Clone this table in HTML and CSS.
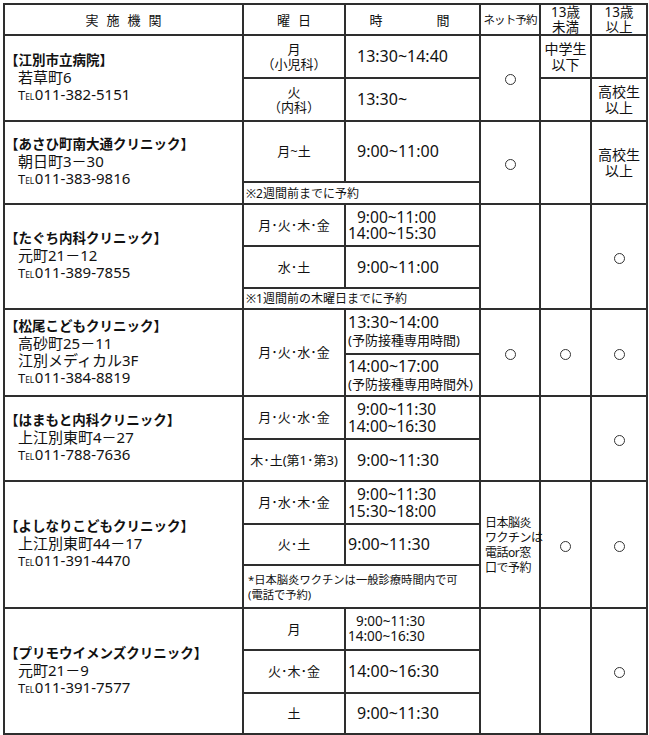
FILE: index.html
```html
<!DOCTYPE html>
<html lang="ja">
<head>
<meta charset="utf-8">
<title>実施機関一覧</title>
<link rel="stylesheet" href="styles.css">
</head>
<body>
<table class="sched">
<colgroup><col class="c1"><col class="c2"><col class="c3"><col class="c4"><col class="c5"><col class="c6"></colgroup>
<thead>
<tr class="rh">
  <th class="hs">実施機関</th>
  <th class="hs">曜日</th>
  <th><span class="jikan"><span>時</span><span>間</span></span></th>
  <th class="net">ネット予約</th>
  <th class="age">13歳<br>未満</th>
  <th class="age">13歳<br>以上</th>
</tr>
</thead>
<tbody>
<!-- 江別市立病院 -->
<tr class="r43">
  <td rowspan="2" class="clinic"><div class="name">【江別市立病院】</div><div class="addr">若草町6</div><div class="addr"><span class="tel">T<span>EL</span></span>011-382-5151</div></td>
  <td class="day">月<br>（小児科）</td>
  <td class="time">13:30~14:40</td>
  <td rowspan="2" class="mark"><span class="o"></span></td>
  <td class="lbl">中学生<br>以下</td>
  <td></td>
</tr>
<tr class="r43">
  <td class="day">火<br>（内科）</td>
  <td class="time">13:30~</td>
  <td></td>
  <td class="lbl">高校生<br>以上</td>
</tr>
<!-- あさひ町南大通クリニック -->
<tr class="r61">
  <td rowspan="2" class="clinic"><div class="name">【あさひ町南大通クリニック】</div><div class="addr">朝日町3－30</div><div class="addr"><span class="tel">T<span>EL</span></span>011-383-9816</div></td>
  <td class="day">月~土</td>
  <td class="time">9:00~11:00</td>
  <td rowspan="2" class="mark"><span class="o"></span></td>
  <td rowspan="2"></td>
  <td rowspan="2" class="lbl">高校生<br>以上</td>
</tr>
<tr class="r22">
  <td colspan="2" class="note">※2週間前までに予約</td>
</tr>
<!-- たぐち内科クリニック -->
<tr class="r42">
  <td rowspan="3" class="clinic"><div class="name">【たぐち内科クリニック】</div><div class="addr">元町21－12</div><div class="addr"><span class="tel">T<span>EL</span></span>011-389-7855</div></td>
  <td class="day">月･火･木･金</td>
  <td class="time two"><span class="ind">9:00~11:00</span><br>14:00~15:30</td>
  <td rowspan="3"></td>
  <td rowspan="3"></td>
  <td rowspan="3" class="mark"><span class="o"></span></td>
</tr>
<tr class="r42">
  <td class="day">水･土</td>
  <td class="time">9:00~11:00</td>
</tr>
<tr class="r21">
  <td colspan="2" class="note">※1週間前の木曜日までに予約</td>
</tr>
<!-- 松尾こどもクリニック -->
<tr class="r45">
  <td rowspan="2" class="clinic"><div class="name">【松尾こどもクリニック】</div><div class="addr">高砂町25－11</div><div class="addr">江別メディカル3F</div><div class="addr"><span class="tel">T<span>EL</span></span>011-384-8819</div></td>
  <td rowspan="2" class="day">月･火･水･金</td>
  <td class="time tight">13:30~14:00<br><span class="sub">(予防接種専用時間)</span></td>
  <td rowspan="2" class="mark"><span class="o"></span></td>
  <td rowspan="2" class="mark"><span class="o"></span></td>
  <td rowspan="2" class="mark"><span class="o"></span></td>
</tr>
<tr class="r42">
  <td class="time tight">14:00~17:00<br><span class="sub">(予防接種専用時間外)</span></td>
</tr>
<!-- はまもと内科クリニック -->
<tr class="r43">
  <td rowspan="2" class="clinic"><div class="name">【はまもと内科クリニック】</div><div class="addr">上江別東町4－27</div><div class="addr"><span class="tel">T<span>EL</span></span>011-788-7636</div></td>
  <td class="day">月･火･水･金</td>
  <td class="time two"><span class="ind">9:00~11:30</span><br>14:00~16:30</td>
  <td rowspan="2"></td>
  <td rowspan="2"></td>
  <td rowspan="2" class="mark"><span class="o"></span></td>
</tr>
<tr class="r42">
  <td class="day">木･土(第1･第3)</td>
  <td class="time">9:00~11:30</td>
</tr>
<!-- よしなりこどもクリニック -->
<tr class="r43">
  <td rowspan="3" class="clinic"><div class="name">【よしなりこどもクリニック】</div><div class="addr">上江別東町44－17</div><div class="addr"><span class="tel">T<span>EL</span></span>011-391-4470</div></td>
  <td class="day">月･水･木･金</td>
  <td class="time two"><span class="ind">9:00~11:30</span><br>15:30~18:00</td>
  <td rowspan="3" class="netnote">日本脳炎<br>ワクチンは<br>電話or窓<br>口で予約</td>
  <td rowspan="3" class="mark"><span class="o"></span></td>
  <td rowspan="3" class="mark"><span class="o"></span></td>
</tr>
<tr class="r41">
  <td class="day">火･土</td>
  <td class="time tight">9:00~11:30</td>
</tr>
<tr class="r43">
  <td colspan="2" class="note fine">*日本脳炎ワクチンは一般診療時間内で可<br>(電話で予約)</td>
</tr>
<!-- プリモウイメンズクリニック -->
<tr class="r42">
  <td rowspan="3" class="clinic"><div class="name">【プリモウイメンズクリニック】</div><div class="addr">元町21－9</div><div class="addr"><span class="tel">T<span>EL</span></span>011-391-7577</div></td>
  <td class="day">月</td>
  <td class="time two small"><span class="ind">9:00~11:30</span><br>14:00~16:30</td>
  <td rowspan="3"></td>
  <td rowspan="3"></td>
  <td rowspan="3" class="mark"><span class="o"></span></td>
</tr>
<tr class="r43">
  <td class="day">火･木･金</td>
  <td class="time tight">14:00~16:30</td>
</tr>
<tr class="r41">
  <td class="day">土</td>
  <td class="time">9:00~11:30</td>
</tr>
</tbody>
</table>
</body>
</html>
```

FILE: styles.css
```css
html, body {
  margin: 0;
  background: #ffffff;
}
body {
  font-family: "Noto Sans", "Noto Sans CJK JP", sans-serif;
  color: #111111;
}
.sched {
  border-collapse: collapse;
  table-layout: fixed;
  width: 643px;
  margin: 3px 0 0 3px;
  border: 2px solid #1a1a1a;
}
.c1 { width: 239px; }
.c2 { width: 102px; }
.c3 { width: 135px; }
.c4 { width: 60px; }
.c5 { width: 51px; }
.c6 { width: 56px; }

.sched th,
.sched td {
  border: 2px solid #2e2e2e;
  padding: 0;
  vertical-align: middle;
  font-weight: normal;
}

.rh { height: 29px; }
.r21 { height: 21px; }
.r22 { height: 22px; }
.r41 { height: 41px; }
.r42 { height: 42px; }
.r43 { height: 43px; }
.r45 { height: 45px; }
.r61 { height: 61px; }

/* header */
.sched th {
  font-size: 13px;
  line-height: 14px;
  text-align: center;
}
.sched th.hs { letter-spacing: 8px; text-indent: 8px; }
.jikan {
  display: flex;
  justify-content: center;
  gap: 54px;
  padding-right: 6px;
}
.sched th.net {
  font-size: 11.5px;
  letter-spacing: -0.9px;
  white-space: nowrap;
}
.sched th.age {
  font-size: 13.5px;
  line-height: 14.5px;
}

/* clinic column */
.name {
  font-size: 13.5px;
  font-weight: bold;
  line-height: 17px;
  white-space: nowrap;
}
.addr {
  font-size: 15px;
  line-height: 17px;
  padding-left: 13px;
  white-space: nowrap;
}
.tel {
  font-size: 13px;
  margin-right: 1px;
}
.tel span {
  font-size: 8.5px;
  letter-spacing: -0.3px;
}

/* day column */
.sched td.day {
  text-align: center;
  font-size: 13px;
  line-height: 15px;
}

/* time column */
.sched td.time {
  font-size: 16px;
  line-height: 17px;
  padding-left: 11px;
  white-space: nowrap;
}
.sched td.time.two,
.sched td.time.tight {
  padding-left: 2px;
}
.sched td.time.two {
  font-size: 15.5px;
  line-height: 16.5px;
}
.sched td.time.small {
  font-size: 13.5px;
  line-height: 15px;
}
.sched td.time.tight .sub {
  font-size: 13px;
}
.ind { padding-left: 9px; }
.small .ind { padding-left: 8px; }

/* notes */
.sched td.note {
  font-size: 12px;
  line-height: 15px;
  padding-left: 2px;
}
.sched td.note.fine {
  font-size: 11.3px;
  padding-left: 4px;
}
.sched td.netnote {
  font-size: 12px;
  line-height: 15px;
  padding-left: 4px;
  white-space: nowrap;
  letter-spacing: -0.5px;
}

/* marks */
.sched td.mark { text-align: center; }
.o {
  display: inline-block;
  width: 11px;
  height: 11px;
  box-sizing: border-box;
  border: 1.3px solid #333333;
  border-radius: 50%;
  vertical-align: middle;
}
.sched td.lbl {
  text-align: center;
  font-size: 14px;
  line-height: 16px;
}
```
